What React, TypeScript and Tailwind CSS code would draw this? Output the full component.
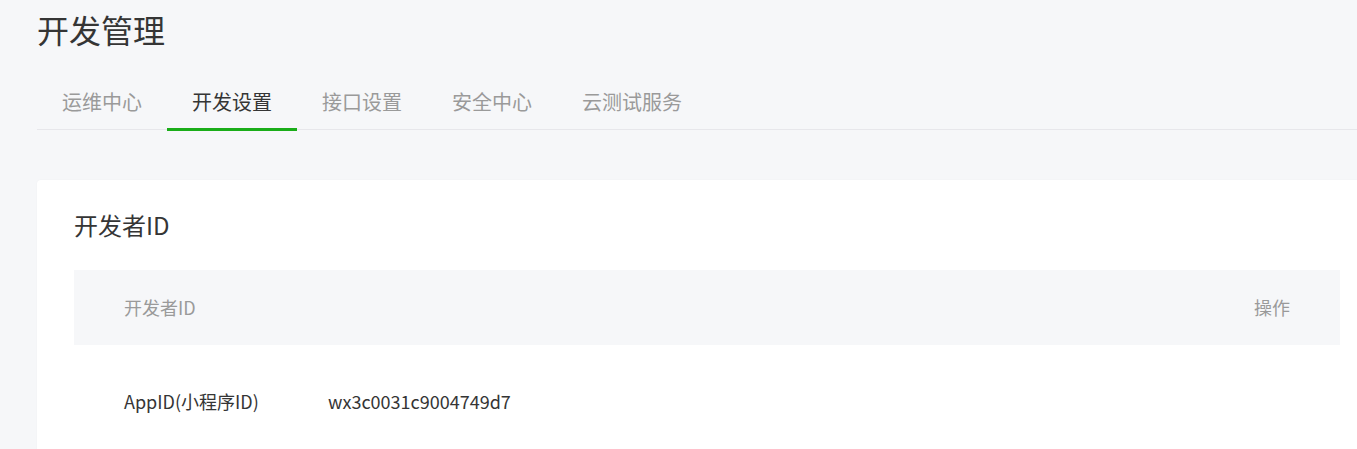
import React from "react";

const tabs = ["运维中心", "开发设置", "接口设置", "安全中心", "云测试服务"];

export default function App() {
  return (
    <div
      className="w-[1357px] h-[449px] overflow-hidden bg-[#f6f7f9] pl-[37px] text-[#353535]"
      style={{ fontFamily: '"Noto Sans CJK SC", "Noto Sans", sans-serif' }}
    >
      <h1 className="pt-[5px] text-[32px] leading-[48px] font-normal text-[#353535]">开发管理</h1>
      <div className="mt-[26px] flex border-b border-[#e7e7eb] w-[1340px]">
        {tabs.map((t, i) => (
          <div
            key={t}
            className={
              i === 1
                ? "px-[25px] h-[52px] flex items-center text-[20px] text-[#353535] border-b-[3px] border-[#1aad19] -mb-[2px] pb-[3px]"
                : "px-[25px] h-[52px] flex items-center text-[20px] text-[#9a9a9a] -mb-[2px] pb-[3px] border-b-[3px] border-transparent"
            }
          >
            {t}
          </div>
        ))}
      </div>
      <div className="mt-[50px] w-[1340px] h-[400px] bg-white rounded-tl-[4px] px-[37px] shadow-[0_0_2px_rgba(0,0,0,0.04)]">
        <div className="pt-[28px] h-[90px] text-[24px] leading-[34px]">开发者ID</div>
        <div className="flex items-center justify-between h-[75px] bg-[#f6f7f9] px-[50px] text-[18px] text-[#9a9a9a]">
          <span>开发者ID</span>
          <span>操作</span>
        </div>
        <div className="flex items-center h-[112px] px-[50px] text-[18px] text-[#353535]">
          <span className="w-[204px]">AppID(小程序ID)</span>
          <span>wx3c0031c9004749d7</span>
        </div>
      </div>
    </div>
  );
}
